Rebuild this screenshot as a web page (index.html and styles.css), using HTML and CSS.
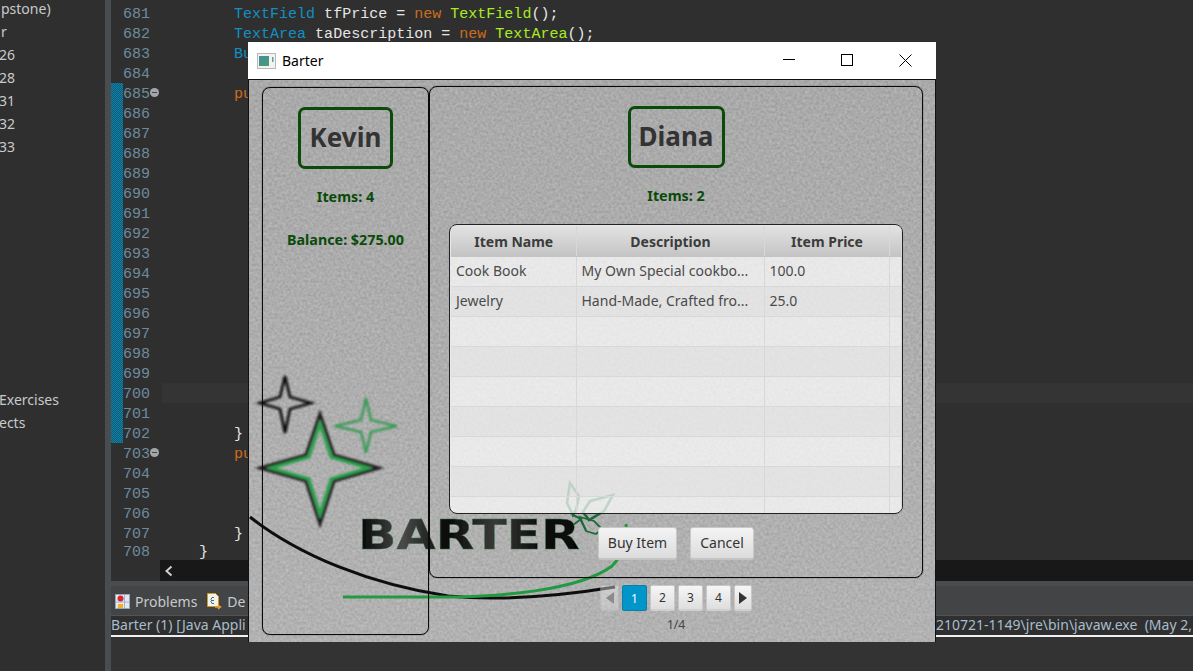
FILE: index.html
```html
<!DOCTYPE html>
<html lang="en">
<head>
  <meta charset="UTF-8">
  <title>Barter</title>
  <link rel="stylesheet" href="styles.css">
</head>
<body>
  <div class="ide">
    <div class="sidebar">
      <div class="tree-row">pstone)</div>
      <div class="tree-row">r</div>
      <div class="tree-row cut">26</div>
      <div class="tree-row cut">28</div>
      <div class="tree-row cut">31</div>
      <div class="tree-row cut">32</div>
      <div class="tree-row cut">33</div>
      <div class="tree-row gap cut">Exercises</div>
      <div class="tree-row cut">ects</div>
    </div>
    <div class="sash-v"></div>
    <div class="main">
      <div class="editor">
        <div class="line"><span class="mark"></span><span class="num">681</span><span class="code in2"><span class="type">TextField</span> tfPrice = <span class="kw">new</span> <span class="ctor">TextField</span>();</span></div>
        <div class="line"><span class="mark"></span><span class="num">682</span><span class="code in2"><span class="type">TextArea</span> taDescription = <span class="kw">new</span> <span class="ctor">TextArea</span>();</span></div>
        <div class="line"><span class="mark"></span><span class="num">683</span><span class="code in2"><span class="type">Bu</span></span></div>
        <div class="line"><span class="mark"></span><span class="num">684</span><span class="code"></span></div>
        <div class="line"><span class="mark on"></span><span class="num fold">685</span><span class="code in2"><span class="kw">pu</span></span></div>
        <div class="line"><span class="mark on"></span><span class="num">686</span><span class="code"></span></div>
        <div class="line"><span class="mark on"></span><span class="num">687</span><span class="code"></span></div>
        <div class="line"><span class="mark on"></span><span class="num">688</span><span class="code"></span></div>
        <div class="line"><span class="mark on"></span><span class="num">689</span><span class="code"></span></div>
        <div class="line"><span class="mark on"></span><span class="num">690</span><span class="code"></span></div>
        <div class="line"><span class="mark on"></span><span class="num">691</span><span class="code"></span></div>
        <div class="line"><span class="mark on"></span><span class="num">692</span><span class="code"></span></div>
        <div class="line"><span class="mark on"></span><span class="num">693</span><span class="code"></span></div>
        <div class="line"><span class="mark on"></span><span class="num">694</span><span class="code"></span></div>
        <div class="line"><span class="mark on"></span><span class="num">695</span><span class="code"></span></div>
        <div class="line"><span class="mark on"></span><span class="num">696</span><span class="code"></span></div>
        <div class="line"><span class="mark on"></span><span class="num">697</span><span class="code"></span></div>
        <div class="line"><span class="mark on"></span><span class="num">698</span><span class="code"></span></div>
        <div class="line"><span class="mark on"></span><span class="num">699</span><span class="code"></span></div>
        <div class="line"><span class="mark on"></span><span class="num">700</span><span class="code current"></span></div>
        <div class="line"><span class="mark on"></span><span class="num">701</span><span class="code"></span></div>
        <div class="line"><span class="mark on"></span><span class="num">702</span><span class="code in2">}</span></div>
        <div class="line"><span class="mark"></span><span class="num fold">703</span><span class="code in2"><span class="kw">pu</span></span></div>
        <div class="line"><span class="mark"></span><span class="num">704</span><span class="code"></span></div>
        <div class="line"><span class="mark"></span><span class="num">705</span><span class="code"></span></div>
        <div class="line"><span class="mark"></span><span class="num">706</span><span class="code"></span></div>
        <div class="line"><span class="mark"></span><span class="num">707</span><span class="code in2">}</span></div>
        <div class="line last"><span class="mark"></span><span class="num">708</span><span class="code in1">}</span></div>
      </div>
      <div class="hscroll">
        <svg class="arrow-left" width="10" height="12" viewBox="0 0 10 12"><path d="M7.5 1.5 2.5 6l5 4.5" fill="none" stroke="#d0d0d0" stroke-width="2"/></svg>
      </div>
      <div class="sash-h"></div>
      <div class="tabs">
        <div class="tab">
          <svg width="15" height="15" viewBox="0 0 15 15"><rect x=".5" y=".5" width="14" height="14" fill="#e4e8f0" stroke="#9aa4b8"/><path d="M9.5 1v13M1 8h13" stroke="#9fb2d0"/><circle cx="5.5" cy="4.5" r="3" fill="#d8262c"/><rect x="3" y="10" width="5" height="4" fill="#f0b030"/></svg>
          <span>Problems</span>
        </div>
        <div class="tab">
          <svg width="16" height="17" viewBox="0 0 16 17"><path d="M1.500.5h8l3 3v10h-11z" fill="#f6f2e0" stroke="#c89a30"/><path d="M8 4.500H6l-1 2 1 1-1 1 1 2h2M5 7.500h3" fill="none" stroke="#3868b0"/><path d="M9 14h5M12 12l2.500 2-2.500 2" fill="none" stroke="#e0a030" stroke-width="1.500"/></svg>
          <span>De</span>
        </div>
      </div>
      <div class="console-head">
        <span class="console-left">Barter (1) [Java Appli</span>
        <span class="console-right">210721-1149\jre\bin\javaw.exe&nbsp; (May 2,</span>
      </div>
      <div class="console-body"></div>
    </div>
  </div>

  <div class="window">
    <div class="titlebar">
      <svg class="app-icon" width="20" height="16" viewBox="0 0 20 16">
        <defs><linearGradient id="appfill" x1="0" y1="0" x2="1" y2="1"><stop offset="0" stop-color="#3f8fa0"/><stop offset="1" stop-color="#4a9a70"/></linearGradient></defs>
        <rect x=".5" y=".5" width="18" height="15" fill="#f2f2f2" stroke="#b8b8c0"/>
        <rect x="2" y="3" width="10" height="10" fill="url(#appfill)"/>
        <rect x="15" y="4" width="1.500" height="5" fill="#6aa090"/>
      </svg>
      <span class="title">Barter</span>
      <div class="controls">
        <div class="control"><svg width="12" height="12" viewBox="0 0 12 12"><path d="M0 5.500h12" stroke="#000"/></svg></div>
        <div class="control"><svg width="12" height="12" viewBox="0 0 12 12"><rect x=".5" y=".5" width="11" height="11" fill="none" stroke="#000"/></svg></div>
        <div class="control"><svg width="13" height="13" viewBox="0 0 13 13"><path d="M.5.5l12 12M12.500.5l-12 12" stroke="#000"/></svg></div>
      </div>
    </div>
    <div class="stage">
      <svg class="backdrop" width="686" height="562" viewBox="249 80 686 562">
        <defs>
          <filter id="grain" x="0" y="0" width="100%" height="100%" color-interpolation-filters="sRGB">
            <feTurbulence type="fractalNoise" baseFrequency="0.36" numOctaves="2" seed="7"/>
            <feColorMatrix type="matrix" values="0.17 0 0 0 0.58  0.17 0 0 0 0.58  0.17 0 0 0 0.58  0 0 0 0 1"/>
          </filter>
          <filter id="soft"><feGaussianBlur stdDeviation="0.6"/></filter>
          <filter id="softer"><feGaussianBlur stdDeviation="0.9"/></filter>
          <linearGradient id="lift" x1="0" y1="0" x2="0" y2="1"><stop offset="0" stop-color="#fff" stop-opacity="0"/><stop offset="1" stop-color="#fff" stop-opacity="0.1"/></linearGradient>
          <linearGradient id="wordfill" gradientUnits="userSpaceOnUse" x1="358" y1="0" x2="580" y2="0">
            <stop offset="0" stop-color="#050505"/><stop offset="0.2" stop-color="#4a4a4a"/><stop offset="0.4" stop-color="#0a0a0a"/><stop offset="0.62" stop-color="#3a3a3a"/><stop offset="0.8" stop-color="#111"/><stop offset="1" stop-color="#050505"/>
          </linearGradient>
        </defs>
        <rect x="249" y="80" width="686" height="562" filter="url(#grain)"/>
        <rect x="249" y="80" width="686" height="562" fill="url(#lift)"/>
        <g filter="url(#softer)">
          <path d="M285 376l5 21 21 6-21 6-5 24-5-24-20-6 20-6z" fill="none" stroke="#111" stroke-width="2.800"/>
          <path d="M366 398l5 22 26 6-26 6-5 21-5-21-26-6 26-6z" fill="none" stroke="#3c9a58" stroke-width="2.600"/>
          <path d="M320 414l14 41 45 13-45 13-14 43-14-43-46-13 46-13z" fill="none" stroke="#1c1c1c" stroke-width="3"/>
          <path d="M320 424l11 33 37 11-37 11-11 35-11-35-38-11 38-11z" fill="none" stroke="#28a04a" stroke-width="3"/>
        </g>
        <g filter="url(#soft)">
          <path d="M250 517C300 556 370 584 448 596C500 601 560 596 615 587" fill="none" stroke="#0e0e0e" stroke-width="3"/>
          <path d="M343 597H428C500 598 580 590 612 566C622 556 628 540 626 524" fill="none" stroke="#219a42" stroke-width="3"/>
          <g fill="none" stroke="#1f6a3a">
            <path stroke-width="2.600" d="M570 483l9 13-3 14-3 5-6-12z"/>
            <path stroke-width="2.600" d="M590 501l23-6-9 16-15 9-6-8z"/>
            <path stroke-width="1.800" d="M580 517l14 4 8 8-6 5-10-3z"/>
            <path stroke-width="2" d="M573 515l8 4-12 9M580 519l6 11"/>
          </g>
        </g>
        <text class="logo-word" x="358" y="549" textLength="222" lengthAdjust="spacingAndGlyphs" filter="url(#soft)">BARTER</text>
      </svg>

      <section class="panel panel-left">
        <div class="name-box">Kevin</div>
        <div class="stat stat-items">Items: 4</div>
        <div class="stat stat-balance">Balance: $275.00</div>
      </section>

      <div class="right-col">
        <section class="panel panel-right">
          <div class="name-box">Diana</div>
          <div class="stat stat-items">Items: 2</div>
          <div class="table-wrap">
            <table class="items">
              <colgroup><col class="c1"><col class="c2"><col class="c3"><col class="c4"></colgroup>
              <thead>
                <tr><th>Item Name</th><th>Description</th><th>Item Price</th><th></th></tr>
              </thead>
              <tbody>
                <tr><td>Cook Book</td><td>My Own Special cookbo...</td><td>100.0</td><td></td></tr>
                <tr><td>Jewelry</td><td>Hand-Made, Crafted fro...</td><td>25.0</td><td></td></tr>
                <tr><td></td><td></td><td></td><td></td></tr>
                <tr><td></td><td></td><td></td><td></td></tr>
                <tr><td></td><td></td><td></td><td></td></tr>
                <tr><td></td><td></td><td></td><td></td></tr>
                <tr><td></td><td></td><td></td><td></td></tr>
                <tr><td></td><td></td><td></td><td></td></tr>
                <tr><td></td><td></td><td></td><td></td></tr>
              </tbody>
            </table>
          </div>
          <div class="actions">
            <button class="btn btn-buy">Buy Item</button>
            <button class="btn btn-cancel">Cancel</button>
          </div>
        </section>
        <div class="pager">
          <button class="page-arrow disabled"><svg width="8" height="12" viewBox="0 0 8 12"><path d="M8 0v12L0 6z" fill="#555"/></svg></button>
          <button class="page active">1</button>
          <button class="page">2</button>
          <button class="page">3</button>
          <button class="page">4</button>
          <button class="page-arrow"><svg width="8" height="12" viewBox="0 0 8 12"><path d="M0 0v12l8-6z" fill="#333"/></svg></button>
        </div>
        <div class="page-label">1/4</div>
      </div>
    </div>
  </div>
</body>
</html>
```

FILE: styles.css
```css
* {
  box-sizing: border-box;
}
html, body {
  margin: 0;
  height: 100%;
  overflow: hidden;
}
body {
  background: #2f2f2f;
  font-family: 'Noto Sans', sans-serif;
  position: relative;
}
.ide {
  display: flex;
  height: 671px;
}
.sidebar {
  width: 105px;
  flex: none;
  color: #c8cacc;
  font-size: 14px;
  overflow: hidden;
}
.tree-row {
  height: 23px;
  line-height: 17px;
  white-space: nowrap;
  padding-left: 1px;
}
.tree-row.cut {
  margin-left: -2px;
}
.tree-row.gap {
  margin-top: 230px;
}
.sash-v {
  width: 6px;
  flex: none;
  background: #4a4d4f;
}
.main {
  flex: 1;
  min-width: 0;
  display: flex;
  flex-direction: column;
}
.editor {
  height: 560px;
  flex: none;
  padding-top: 3px;
  overflow: hidden;
  font-family: 'Liberation Mono', monospace;
  font-size: 15.03px;
  color: #e6e6e6;
}
.line {
  display: flex;
  height: 20px;
  line-height: 22px;
}
.line.last {
  height: 17px;
  padding-top: 2px;
  line-height: 15px;
}
.mark {
  width: 12px;
  flex: none;
}
.mark.on {
  background-color: #0f6f92;
  background-image: repeating-conic-gradient(#0b5d7c 0 25%, #147ea3 0 50%);
  background-size: 2px 2px;
}
.num {
  width: 39px;
  flex: none;
  color: #6e8b9e;
  position: relative;
}
.num.fold::after {
  content: "";
  position: absolute;
  left: 27px;
  top: 5px;
  width: 9px;
  height: 9px;
  border-radius: 50%;
  background: linear-gradient(#44484c, #44484c) center / 5px 1px no-repeat #a0a6aa;
}
.code {
  flex: 1;
  white-space: pre;
}
.code.in1 { padding-left: 37px; }
.code.in2 { padding-left: 72px; }
.code.current { background: #343434; }
.type { color: #1290c3; }
.kw { color: #cc6c1d; }
.ctor { color: #a7ec21; }
.hscroll {
  height: 21px;
  flex: none;
  margin-left: 49px;
  background: #181818;
  display: flex;
  align-items: center;
  padding-left: 4px;
}
.sash-h {
  height: 5px;
  flex: none;
  background: #4a4d4f;
}
.tabs {
  height: 30px;
  flex: none;
  background: #424446;
  display: flex;
  gap: 9px;
  padding: 2px 0 0 4px;
  align-items: center;
  color: #c8cacc;
  font-size: 14px;
  border-bottom: 1px solid #525456;
}
.tab {
  display: flex;
  align-items: center;
  gap: 5px;
}
.console-head {
  height: 21px;
  flex: none;
  display: flex;
  white-space: nowrap;
  overflow: hidden;
  color: #a8bccb;
  font-size: 14px;
  line-height: 17px;
  border-bottom: 2px solid #f0f0f0;
}
.console-left {
  width: 825px;
  flex: none;
}
.console-body {
  flex: 1;
  background: #333;
}

/* the Barter window */
.window {
  position: absolute;
  left: 248px;
  top: 42px;
  width: 688px;
  height: 600px;
  display: flex;
  flex-direction: column;
}
.titlebar {
  height: 37px;
  flex: none;
  background: #fff;
  display: flex;
  align-items: center;
  padding-left: 9px;
}
.app-icon {
  margin-right: 5px;
}
.title {
  font-size: 14px;
  color: #000;
}
.controls {
  margin-left: auto;
  display: flex;
  padding-right: 1px;
}
.control {
  width: 58.5px;
  display: flex;
  justify-content: center;
}
.stage {
  flex: 1;
  min-height: 0;
  position: relative;
  display: flex;
  align-items: flex-start;
  border: 1px solid #111;
  padding: 6px 12px 0 13px;
}
.backdrop {
  position: absolute;
  left: 0;
  top: 0;
}
.logo-word {
  font-family: 'DejaVu Sans', sans-serif;
  font-weight: bold;
  font-size: 40px;
  fill: url(#wordfill);
  stroke: #2a6a3a;
  stroke-width: 0.4;
}
.panel {
  position: relative;
  border: 1px solid #0a0a0a;
  border-radius: 8px;
  box-shadow: 0 0 1px #000;
  display: flex;
  flex-direction: column;
  align-items: center;
}
.panel-left {
  width: 167px;
  height: 548px;
  margin-top: 1px;
  padding-top: 19px;
}
.right-col {
  position: relative;
  width: 494px;
  display: flex;
  flex-direction: column;
  align-items: center;
}
.panel-right {
  width: 494px;
  height: 492px;
  padding-top: 19px;
}
.name-box {
  width: 95px;
  height: 62px;
  padding-bottom: 2px;
  border: 3px solid #0a4a0a;
  border-radius: 7px;
  display: flex;
  align-items: center;
  justify-content: center;
  color: #333;
  font-size: 26px;
  font-weight: bold;
}
.panel-right .name-box {
  width: 97px;
}
.stat {
  color: #0a4a0a;
  font-size: 14.3px;
  font-weight: bold;
  line-height: 18px;
}
.stat-items {
  margin-top: 19px;
}
.stat-balance {
  margin-top: 25px;
}
.table-wrap {
  width: 454px;
  height: 290px;
  margin-top: 19px;
  border: 1px solid #222;
  border-radius: 8px;
  padding: 1px;
  overflow: hidden;
  background: rgba(255, 255, 255, 0.72);
}
.items {
  width: 450px;
  table-layout: fixed;
  border-collapse: collapse;
  font-size: 14px;
  color: #4a4a4a;
}
.c1 { width: 125px; }
.c2 { width: 188px; }
.c3 { width: 125px; }
.c4 { width: 12px; }
.items th {
  height: 30px;
  padding: 1px 0 0 1px;
  background: linear-gradient(#e2e2e2, #c4c4c4);
  border-right: 1px solid #d8d8d8;
  border-bottom: 1px solid #c4c4c4;
  color: #3c3c3c;
  font-weight: bold;
}
.items td {
  height: 30px;
  padding: 0 0 2px 5px;
  border-right: 1px solid #d8d8d8;
  border-bottom: 1px solid #d8d8d8;
  white-space: nowrap;
  overflow: hidden;
}
.items tbody tr:nth-child(even) td {
  background: rgba(200, 200, 200, 0.18);
}
.actions {
  display: flex;
  gap: 13px;
  margin-top: 13px;
}
.btn {
  height: 33px;
  padding: 0 0 2px;
  border: 1px solid #c8c8c8;
  border-bottom: 2px solid #c4c4c4;
  border-radius: 3px;
  background: linear-gradient(#f4f4f4, #dcdcdc);
  color: #333;
  font-family: inherit;
  font-size: 14px;
}
.btn-buy { width: 79px; }
.btn-cancel { width: 64px; }
.pager {
  display: flex;
  gap: 3px;
  margin-top: 7px;
  height: 26px;
}
.page, .page-arrow {
  height: 26px;
  padding: 0;
  border: 1px solid #c8c8c8;
  border-bottom: 2px solid #d0d0d0;
  border-radius: 2px;
  background: linear-gradient(#f6f6f6, #dedede);
  color: #333;
  font-family: inherit;
  font-size: 12px;
  display: flex;
  align-items: center;
  justify-content: center;
}
.page { width: 25px; }
.page-arrow { width: 18px; }
.page-arrow.disabled {
  opacity: 0.4;
  width: 19px;
}
.page.active {
  background: #0096c9;
  border: 1px solid #0a7fa8;
  color: #fff;
}
.page-label {
  margin-top: 6px;
  font-size: 12px;
  line-height: 16px;
  color: #444;
}
```
